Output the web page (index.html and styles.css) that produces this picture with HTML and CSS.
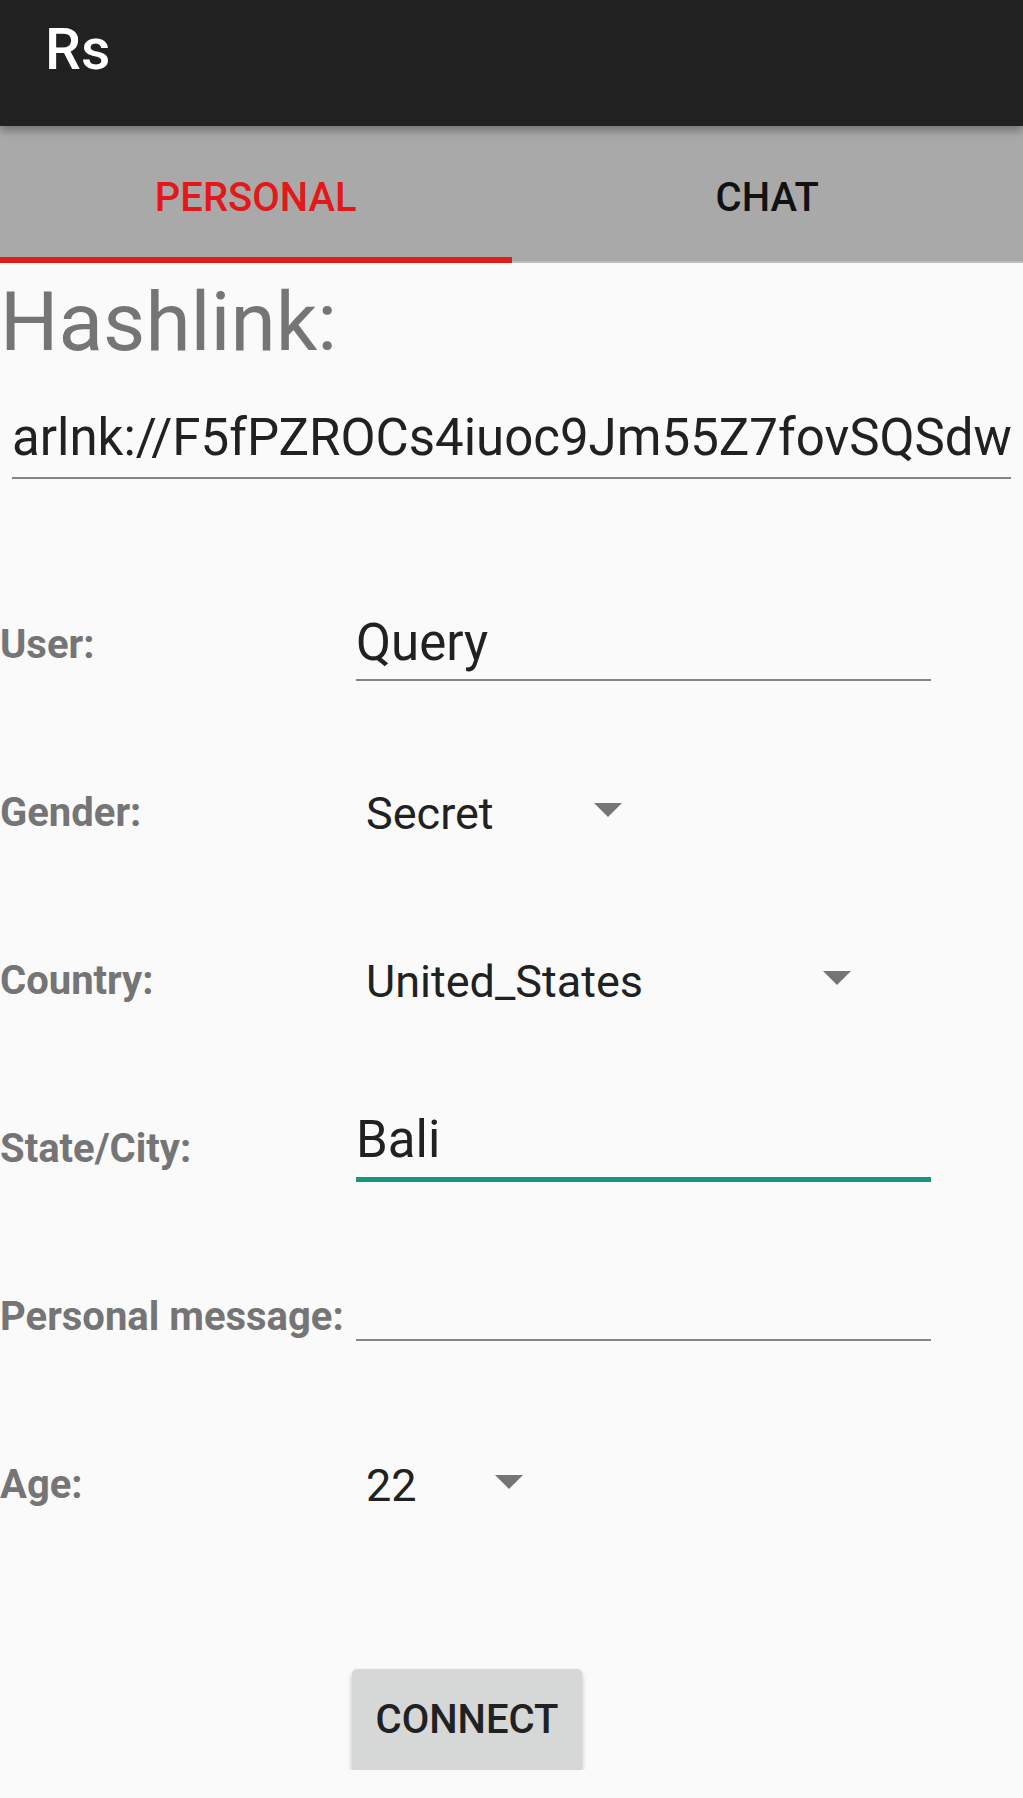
FILE: index.html
```html
<!DOCTYPE html>
<html lang="en">
<head>
    <meta charset="UTF-8">
    <meta name="viewport" content="width=device-width, initial-scale=1.0">
    <title>Rs</title>
    <link rel="stylesheet" href="styles.css">
</head>
<body>
    <header class="toolbar">
        <span class="toolbar-title">Rs</span>
    </header>

    <nav class="tabs">
        <div class="tab tab-active">Personal</div>
        <div class="tab">Chat</div>
    </nav>

    <main class="content">
        <h1 class="hash-title">Hashlink:</h1>
        <div class="hash-field">arlnk://F5fPZROCs4iuoc9Jm55Z7fovSQSdw</div>

        <div class="form">
            <div class="row">
                <div class="row-label">User:</div>
                <div class="edit">Query</div>
            </div>

            <div class="row">
                <div class="row-label">Gender:</div>
                <div class="spinner spinner-gender">
                    <span>Secret</span>
                    <svg class="spinner-arrow" viewBox="0 0 28 14"><polygon points="0,0 28,0 14,14"/></svg>
                </div>
            </div>

            <div class="row">
                <div class="row-label">Country:</div>
                <div class="spinner spinner-country">
                    <span>United_States</span>
                    <svg class="spinner-arrow" viewBox="0 0 28 14"><polygon points="0,0 28,0 14,14"/></svg>
                </div>
            </div>

            <div class="row">
                <div class="row-label">State/City:</div>
                <div class="edit edit-focused">Bali</div>
            </div>

            <div class="row">
                <div class="row-label">Personal message:</div>
                <div class="edit edit-empty"></div>
            </div>

            <div class="row">
                <div class="row-label">Age:</div>
                <div class="spinner spinner-age">
                    <span>22</span>
                    <svg class="spinner-arrow" viewBox="0 0 28 14"><polygon points="0,0 28,0 14,14"/></svg>
                </div>
            </div>
        </div>

        <div class="actions">
            <button class="btn" type="button">Connect</button>
        </div>
    </main>
</body>
</html>
```

FILE: styles.css
```css
body {
    margin: 0;
    font-family: Roboto, "Noto Sans", Arial, sans-serif;
    background-color: #fafafa;
    color: #212121;
}

/* barra superior */
.toolbar {
    position: relative;
    z-index: 1;
    height: 126px;
    box-sizing: border-box;
    padding: 16px 0 0 45px;
    background-color: #212121;
    box-shadow: 0 4px 9px rgba(0, 0, 0, 0.35);
}

.toolbar-title {
    font-size: 57px;
    font-weight: 500;
    line-height: 67px;
    color: #fff;
}

/* pestañas */
.tabs {
    display: flex;
    height: 137px;
    background-color: #a9a9a9;
}

.tab {
    flex: 1;
    box-sizing: border-box;
    padding-top: 48px;
    text-align: center;
    font-size: 40px;
    font-weight: 500;
    line-height: 47px;
    text-transform: uppercase;
    color: #111;
    border-bottom: 2px solid #bdbdbd;
}

.tab-active {
    color: #e3181b;
    border-bottom: 6px solid #e31b1b;
}

/* hashlink */
.hash-title {
    margin: 12px 0 0;
    font-size: 82px;
    font-weight: 400;
    line-height: 95px;
    color: #757575;
}

.hash-field {
    margin: 38px 12px 0;
    padding-bottom: 10px;
    border-bottom: 2px solid #858585;
    font-size: 51px;
    line-height: 59px;
    white-space: nowrap;
    overflow: hidden;
}

/* formulario */
.form {
    margin-top: 79px;
}

.row {
    display: grid;
    grid-template-columns: 356px 575px;
    height: 168px;
    align-items: start;
}

.row-label {
    margin-top: 63px;
    font-size: 40px;
    font-weight: 700;
    line-height: 47px;
    color: #757575;
    white-space: nowrap;
}

.edit {
    margin-top: 55px;
    height: 59px;
    padding-bottom: 7px;
    border-bottom: 2px solid #858585;
    font-size: 51px;
    line-height: 59px;
}

.edit-focused {
    margin-top: 48px;
    padding-bottom: 8px;
    border-bottom: 5px solid #17967f;
}

.edit-empty {
    margin-top: 43px;
}

.spinner {
    display: flex;
    align-items: flex-start;
    box-sizing: border-box;
    margin-top: 61px;
    padding-left: 10px;
    font-size: 45px;
    line-height: 53px;
}

.spinner-arrow {
    margin-left: auto;
    margin-top: 16px;
    width: 28px;
    height: 14px;
    fill: #757575;
}

.spinner-gender {
    width: 266px;
}

.spinner-country {
    width: 495px;
}

.spinner-age {
    width: 167px;
}

/* boton */
.actions {
    margin-top: 103px;
    padding-left: 352px;
}

.btn {
    width: 230px;
    height: 101px;
    padding: 0;
    border: none;
    border-radius: 5px;
    background-color: #d6d7d7;
    box-shadow: 0 3px 5px rgba(0, 0, 0, 0.25);
    font-family: Roboto, "Noto Sans", Arial, sans-serif;
    font-size: 40px;
    font-weight: 500;
    color: #212121;
    text-transform: uppercase;
}
```
